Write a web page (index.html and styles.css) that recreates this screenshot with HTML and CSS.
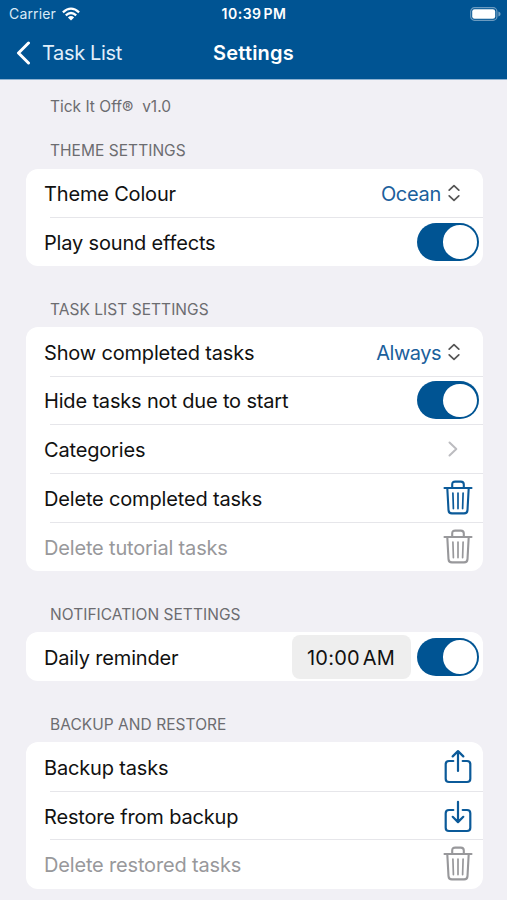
FILE: index.html
```html
<!DOCTYPE html>
<html lang="en">
<head>
<meta charset="utf-8">
<title>Settings</title>
<link rel="stylesheet" href="styles.css">
</head>
<body>
<svg class="defs" aria-hidden="true">
  <symbol id="trash" viewBox="0 0 30 36">
    <g fill="none" stroke="currentColor" stroke-width="2.1" stroke-linecap="round" stroke-linejoin="round">
      <path d="M1.5 8H28.5M9.2 7.8V4.6Q9.2 1.6 12.2 1.6H17.8Q20.8 1.6 20.8 4.6V7.8M4.3 8.3L5.5 30.1Q5.7 33.4 8.9 33.4H21.1Q24.3 33.4 24.5 30.1L25.7 8.3"/>
      <path stroke-width="1.7" d="M9.9 13L10.4 28.6M15 13V28.6M20.1 13L19.6 28.6"/>
    </g>
  </symbol>
  <symbol id="export" viewBox="0 0 30 36">
    <path fill="none" stroke="currentColor" stroke-width="2.2" stroke-linecap="round" stroke-linejoin="round" d="M10.3 12H6Q2.7 12 2.7 15.3V29.7Q2.7 33 6 33H24Q27.3 33 27.3 29.7V15.3Q27.3 12 24 12H19.7M15 22V2.4M9.7 7.4L15 2.1L20.3 7.4"/>
  </symbol>
  <symbol id="import" viewBox="0 0 30 36">
    <path fill="none" stroke="currentColor" stroke-width="2.2" stroke-linecap="round" stroke-linejoin="round" d="M10.3 12H6Q2.7 12 2.7 15.3V29.7Q2.7 33 6 33H24Q27.3 33 27.3 29.7V15.3Q27.3 12 24 12H19.7M15 3.8V24M9.7 18.8L15 24.1L20.3 18.8"/>
  </symbol>
  <symbol id="updown" viewBox="0 0 12 18">
    <path fill="none" stroke="currentColor" stroke-width="1.7" stroke-linecap="round" stroke-linejoin="round" d="M1.2 6.2L6 1.7L10.8 6.2M1.2 11.8L6 16.3L10.8 11.8"/>
  </symbol>
</svg>

<header class="header">
  <div class="status">
    <div class="carrier"><span>Carrier</span>
      <svg class="wifi" viewBox="0 0 18 14" fill="none" stroke="#fff" stroke-width="2.3"><path d="M.9 5.3Q9-2.1 17.1 5.3M3.8 8.3Q9 3.6 14.2 8.3"/><path fill="#fff" stroke="none" d="M9 13.5L5.9 10.4Q9 7.7 12.1 10.4Z"/></svg>
    </div>
    <div class="clock">10:39 PM</div>
    <svg class="battery" viewBox="0 0 31 14"><rect x=".7" y=".7" width="26.2" height="12.6" rx="3.8" fill="none" stroke="#fff" stroke-opacity=".42" stroke-width="1.2"/><rect x="2.2" y="2.2" width="23" height="9.6" rx="2.3" fill="#fff"/><path d="M28.4 4.6Q30.6 5.4 30.6 7Q30.6 8.6 28.4 9.4Z" fill="#fff" fill-opacity=".45"/></svg>
  </div>
  <nav class="nav">
    <div class="back"><svg class="chev-back" viewBox="0 0 15 24"><path d="M12.5 2L2.5 12L12.5 22" fill="none" stroke="#fff" stroke-width="3" stroke-linecap="round" stroke-linejoin="round"/></svg><span>Task List</span></div>
    <h1 class="title">Settings</h1>
    <div></div>
  </nav>
</header>

<main class="content">
  <p class="version">Tick It Off<span class="reg">®</span>&nbsp; v1.0</p>

  <section class="group">
    <h2 class="heading">THEME SETTINGS</h2>
    <div class="card">
      <div class="row"><span class="label">Theme Colour</span><span class="value">Ocean</span><svg class="updown"><use href="#updown"/></svg></div>
      <div class="row"><span class="label">Play sound effects</span><span class="toggle"></span></div>
    </div>
  </section>

  <section class="group">
    <h2 class="heading">TASK LIST SETTINGS</h2>
    <div class="card">
      <div class="row"><span class="label">Show completed tasks</span><span class="value tight">Always</span><svg class="updown"><use href="#updown"/></svg></div>
      <div class="row"><span class="label">Hide tasks not due to start</span><span class="toggle"></span></div>
      <div class="row"><span class="label">Categories</span><svg class="chev" viewBox="0 0 10 16"><path d="M1.5 1.5L8.3 8L1.5 14.5" fill="none" stroke="currentColor" stroke-width="2" stroke-linecap="round" stroke-linejoin="round"/></svg></div>
      <div class="row"><span class="label">Delete completed tasks</span><svg class="icon"><use href="#trash"/></svg></div>
      <div class="row disabled"><span class="label">Delete tutorial tasks</span><svg class="icon"><use href="#trash"/></svg></div>
    </div>
  </section>

  <section class="group">
    <h2 class="heading">NOTIFICATION SETTINGS</h2>
    <div class="card">
      <div class="row"><span class="label">Daily reminder</span><span class="time">10:00 AM</span><span class="toggle"></span></div>
    </div>
  </section>

  <section class="group">
    <h2 class="heading">BACKUP AND RESTORE</h2>
    <div class="card">
      <div class="row"><span class="label">Backup tasks</span><svg class="icon"><use href="#export"/></svg></div>
      <div class="row"><span class="label">Restore from backup</span><svg class="icon"><use href="#import"/></svg></div>
      <div class="row disabled"><span class="label">Delete restored tasks</span><svg class="icon"><use href="#trash"/></svg></div>
    </div>
  </section>
</main>
</body>
</html>
```
FILE: styles.css
```css
* { box-sizing: border-box; }
body {
  margin: 0;
  height: 900px;
  overflow: hidden;
  background: #f1f0f5;
  color: #111;
  font-family: Inter, "Liberation Sans", sans-serif;
}
svg { display: block; flex: none; }
.defs { display: none; }

.header {
  height: 80px;
  background: #005493;
  border-bottom: 1px solid #8fb3d2;
  color: #fff;
}
.status, .nav {
  display: grid;
  grid-template-columns: 1fr auto 1fr;
  align-items: center;
}
.status { height: 27px; padding: 0 6px 0 9px; font-size: 14px; }
.carrier { display: flex; align-items: center; gap: 6px; letter-spacing: .15px; color: #d9eaf7; }
.wifi { width: 18px; height: 14px; }
.clock { font-weight: 600; font-size: 14px; letter-spacing: .5px; word-spacing: -2px; margin-left: -2px; }
.battery { width: 31px; height: 14px; justify-self: end; }
.nav { height: 51px; padding-left: 16px; padding-right: 16px; font-size: 20px; }
.back { display: flex; align-items: center; gap: 11px; color: #e0effa; letter-spacing: -.35px; }
.chev-back { width: 15px; height: 24px; }
.title { margin: 0; font-size: 20px; font-weight: 600; letter-spacing: .2px; }

.content { padding: 0 24.5px 0 26px; }
.version { margin: 0; padding: 17px 0 0 24px; height: 61px; font-size: 15.5px; line-height: 20px; color: #6c6c70; letter-spacing: 0; }
.reg { font-size: 17px; line-height: 1; vertical-align: -2px; }
.heading {
  margin: 0;
  height: 27.5px;
  padding-left: 24px;
  font-size: 15.5px;
  line-height: 20px;
  font-weight: 400;
  color: #6c6c70;
  letter-spacing: .04px;
}
.group { margin-bottom: 33.5px; }
.card { background: #fff; border-radius: 12px; }
.row {
  position: relative;
  display: flex;
  align-items: center;
  height: 48.85px;
  padding: 0 3.5px 0 18px;
  font-size: 20px;
}
.row + .row::before {
  content: "";
  position: absolute;
  left: 24px;
  right: 0;
  top: -.5px;
  height: 1px;
  background: #e6e6ea;
}
.label { flex: 1; padding-top: 2px; letter-spacing: -.17px; white-space: nowrap; }
.value { padding-top: 2px; color: #1b609c; letter-spacing: -.3px; }
.tight { letter-spacing: -.5px; }
.updown { width: 12px; height: 18px; margin: 0 19px 0 7px; color: #555; }
.chev { width: 10px; height: 16px; margin-right: 21px; color: #bcbcc0; }
.icon { width: 30px; height: 36px; margin-right: 6.5px; color: #0b5a99; }
.disabled { color: #98989b; }
.disabled .icon { color: #98989b; }
.toggle {
  display: flex;
  justify-content: flex-end;
  width: 62.5px;
  height: 38px;
  padding: 2.2px;
  border-radius: 19px;
  background: #005493;
}
.toggle::before { content: ""; width: 33.6px; height: 33.6px; border-radius: 50%; background: #fff; }
.time {
  width: 119px;
  height: 44px;
  margin-right: 6px;
  border-radius: 8px;
  background: #eee;
  line-height: 46px;
  text-align: center;
  letter-spacing: .25px;
  word-spacing: -3px;
}
```
